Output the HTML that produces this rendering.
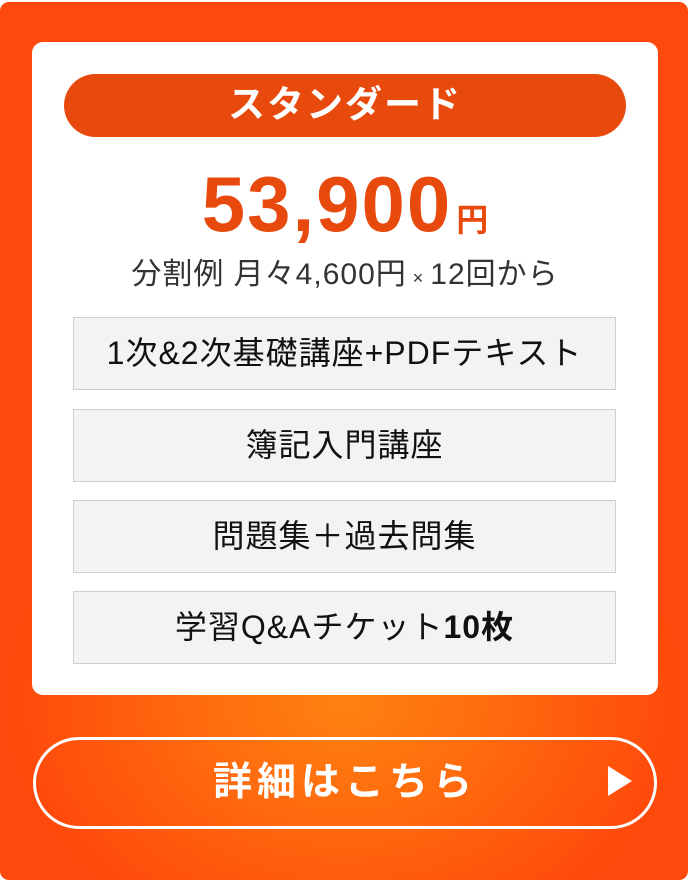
<!DOCTYPE html>
<html><head><meta charset="utf-8"><style>
html,body{margin:0;padding:0;background:#fff;}
body{width:690px;height:882px;position:relative;overflow:hidden;font-family:"Liberation Sans","Noto Sans CJK JP",sans-serif;}
.bg{position:absolute;left:0;top:2px;width:688px;height:878px;border-radius:9px;
background:radial-gradient(ellipse 340px 260px at 345px 700px,#ff8210 0%,#ff6a0e 45%,#ff480b 100%);}
.card{position:absolute;left:32px;top:42px;width:626px;height:653px;background:#fff;border-radius:11px;}
.pill{position:absolute;left:32px;top:32px;width:562px;height:63px;border-radius:32px;background:#e8490c;color:#fff;
font-weight:bold;font-size:37px;text-align:center;line-height:61px;letter-spacing:2px;}
.price{position:absolute;left:0;width:626px;top:116px;text-align:center;color:#e8490c;font-weight:bold;font-size:78px;line-height:92px;letter-spacing:2px;}
.price small{font-size:32px;letter-spacing:0;margin-left:4px;}
.sub{position:absolute;left:0;width:626px;top:212px;text-align:center;color:#333;font-size:30px;line-height:42px;letter-spacing:1px;}
.sub .x{font-size:18px;}
.box{position:absolute;left:41px;width:541px;height:71px;background:#f3f3f3;border:1px solid #cfcfcf;text-align:center;
font-size:32px;line-height:71px;color:#111;letter-spacing:1px;}
.btn{position:absolute;left:33px;top:737px;width:618px;height:86px;border:3px solid #fff;border-radius:46px;color:#fff;
font-weight:bold;font-size:39px;text-align:center;line-height:86px;letter-spacing:5px;}
.tri{position:absolute;left:608px;top:766px;}
</style></head><body>
<div class="bg"></div>
<div class="card">
 <div class="pill">スタンダード</div>
 <div class="price">53,900<small>円</small></div>
 <div class="sub">分割例 月々4,600円<span class="x"> × </span>12回から</div>
 <div class="box" style="top:275px">1次&amp;2次基礎講座+PDFテキスト</div>
 <div class="box" style="top:367px">簿記入門講座</div>
 <div class="box" style="top:458px">問題集＋過去問集</div>
 <div class="box" style="top:549px">学習Q&amp;Aチケット<b>10枚</b></div>
</div>
<div class="btn">詳細はこちら</div>
<svg class="tri" width="26" height="30" viewBox="0 0 26 30"><path d="M0 0 L24 15 L0 30 Z" fill="#fff"/></svg>
</body></html>
